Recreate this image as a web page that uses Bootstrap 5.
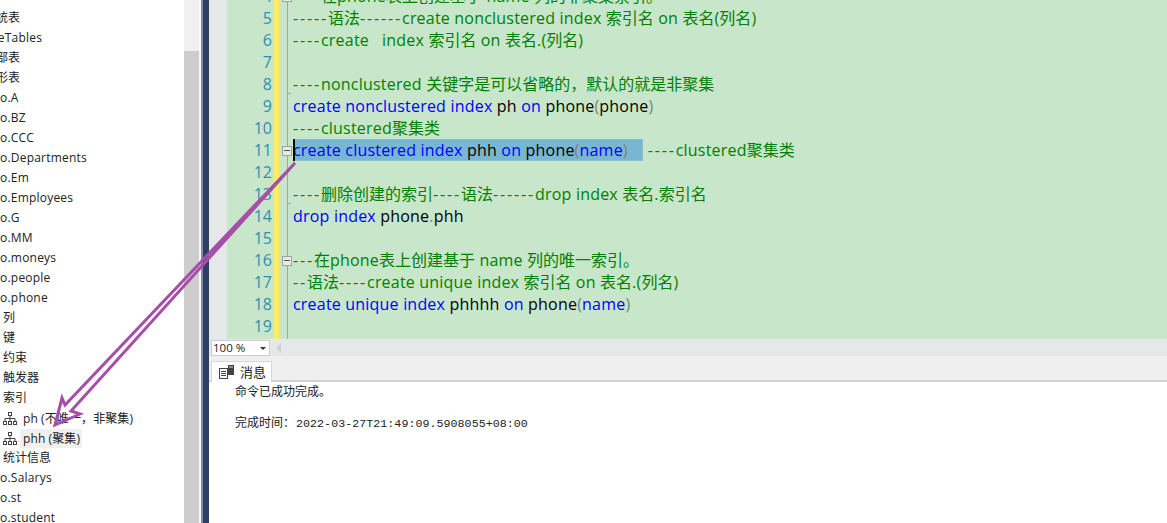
<!DOCTYPE html>
<html lang="zh">
<head>
<meta charset="utf-8">
<title>索引</title>
<link href="https://cdn.jsdelivr.net/npm/bootstrap@5.3.0/dist/css/bootstrap.min.css" rel="stylesheet">
<style>
html,body{height:523px;overflow:hidden;background:#fff}
.ui-font{font-family:"Open Sans","Noto Sans CJK SC",sans-serif}
.shell{height:523px;position:relative}
.tree-pane{width:184px;height:523px;overflow:hidden;padding-top:8px;font-size:12px;color:#222}
.tree-row{height:20px;line-height:20px;white-space:nowrap}
.in-1{padding-left:3px}
.cut-a{margin-left:-16px}
.cut-b{margin-left:-15px;letter-spacing:.2px}
.cut-c{margin-left:-15px;letter-spacing:.2px}
.tree-lbl{padding:0 2px 0 3px;height:19px;line-height:19px;margin-left:3px;letter-spacing:.1px}
.tree-sel{background:#f0f0f0}
.vscroll{width:15px;background:#f0f0f0;padding-top:51px}
.vthumb{height:100%;background:#cdcdcd}
.split-w{width:2px;background:#f8f8f8}
.split-l{width:2px;background:#7d8ca8}
.split-n{width:6px;background:#2d4063}
.main-col{width:958px;overflow:hidden}
.editor{height:339px;overflow:hidden;background:#c7e6ca;padding-top:0}
.code-wrap{margin-top:-15px}
.code-row{height:22px;line-height:22px;font-size:16px;white-space:pre;color:#008000;letter-spacing:.2px}
.cj{letter-spacing:0}
.gut{width:18px;background:#e6e7e8}
.num{width:45px;text-align:right;color:#2b91af;margin-right:2px;letter-spacing:0}
.yel{width:5px;background:#ffee62}
.fold{width:14px;position:relative}
.fold::before{content:"";position:absolute;left:8px;top:0;bottom:0;width:1px;background:#a5a5a5}
.fold-box{position:absolute;left:3px;top:7px;width:10px;height:10px;background:#e4ece4;border:1px solid #a0a0a0}
.fold-box::after{content:"";position:absolute;left:1px;right:1px;top:3px;height:1px;background:#555}
.fold-end::after{content:"";position:absolute;left:8px;bottom:1px;width:4px;height:1px;background:#a5a5a5}
.k{color:#00f}
.b{color:#000}
.g{color:#808080}
.ds{letter-spacing:1.85px}
.sel-run{background:#78b7d3;box-shadow:inset 0 0 0 1px #8dc0cc;padding-right:15px;margin-right:5px;display:inline-block;height:22px;position:relative}
.caret-bar{position:absolute;left:0;top:0;width:2px;height:22px;background:#000}
.zoom-bar{height:17px;background:#e6e7e8;padding-left:2px}
.zoom-box{width:59px;height:16px;background:#fff;border:1px solid #ccced4;font-size:11.5px;line-height:14px;padding-left:1px;color:#222;position:relative}
.zoom-drop{position:absolute;right:3px;top:6px;width:0;height:0;border-left:3px solid transparent;border-right:3px solid transparent;border-top:3px solid #333}
.zoom-left{width:0;height:0;margin-left:6px;border-top:5px solid transparent;border-bottom:5px solid transparent;border-right:5px solid #cfd1d6}
.tab-strip{height:26px;background:#efefef;border-bottom:2px solid #d2d2d2;padding:5px 0 0 2px}
.msg-tab{width:61px;height:21px;background:#fff;border:1px solid #d8d8d8;border-bottom:0;font-size:13px;line-height:20px;color:#222;gap:6px;padding-left:7px}
.results{font-size:12px;line-height:16px;color:#222;padding:2px 0 0 26px}
.results p{margin:0;height:31px}
.mono{font-family:"Liberation Mono",monospace;font-size:11.67px;margin-left:1px;letter-spacing:.03px}
.arrow-layer{position:absolute;left:0;top:0;pointer-events:none}
</style>
</head>
<body>
<div class="shell d-flex ui-font">
  <div class="tree-pane flex-shrink-0">
    <div class="tree-row"><span class="cut-a d-inline-block">系统表</span></div>
    <div class="tree-row"><span class="cut-c d-inline-block">FileTables</span></div>
    <div class="tree-row"><span class="cut-a d-inline-block">外部表</span></div>
    <div class="tree-row"><span class="cut-a d-inline-block">图形表</span></div>
    <div class="tree-row"><span class="cut-b d-inline-block">dbo.A</span></div>
    <div class="tree-row"><span class="cut-b d-inline-block">dbo.BZ</span></div>
    <div class="tree-row"><span class="cut-b d-inline-block">dbo.CCC</span></div>
    <div class="tree-row"><span class="cut-b d-inline-block">dbo.Departments</span></div>
    <div class="tree-row"><span class="cut-b d-inline-block">dbo.Em</span></div>
    <div class="tree-row"><span class="cut-b d-inline-block">dbo.Employees</span></div>
    <div class="tree-row"><span class="cut-b d-inline-block">dbo.G</span></div>
    <div class="tree-row"><span class="cut-b d-inline-block">dbo.MM</span></div>
    <div class="tree-row"><span class="cut-b d-inline-block">dbo.moneys</span></div>
    <div class="tree-row"><span class="cut-b d-inline-block">dbo.people</span></div>
    <div class="tree-row"><span class="cut-b d-inline-block">dbo.phone</span></div>
    <div class="tree-row in-1">列</div>
    <div class="tree-row in-1">键</div>
    <div class="tree-row in-1">约束</div>
    <div class="tree-row in-1">触发器</div>
    <div class="tree-row in-1">索引</div>
    <div class="tree-row in-1 d-flex align-items-center">
      <svg width="14" height="13" viewBox="0 0 14 13" fill="none" stroke="#444" stroke-width="1"><rect x="5.5" y="0.5" width="3" height="3"/><path d="M7 4v3M2 9V6.5h10V9M7 7v2"/><rect x="0.5" y="9.5" width="3" height="3"/><rect x="5.5" y="9.5" width="3" height="3"/><rect x="10.5" y="9.5" width="3" height="3"/></svg>
      <span class="tree-lbl">ph (不唯一，非聚集)</span>
    </div>
    <div class="tree-row in-1 d-flex align-items-center">
      <svg width="14" height="13" viewBox="0 0 14 13" fill="none" stroke="#444" stroke-width="1"><rect x="5.5" y="0.5" width="3" height="3"/><path d="M7 4v3M2 9V6.5h10V9M7 7v2"/><rect x="0.5" y="9.5" width="3" height="3"/><rect x="5.5" y="9.5" width="3" height="3"/><rect x="10.5" y="9.5" width="3" height="3"/></svg>
      <span class="tree-lbl tree-sel">phh (聚集)</span>
    </div>
    <div class="tree-row in-1">统计信息</div>
    <div class="tree-row"><span class="cut-b d-inline-block">dbo.Salarys</span></div>
    <div class="tree-row"><span class="cut-b d-inline-block">dbo.st</span></div>
    <div class="tree-row"><span class="cut-b d-inline-block">dbo.student</span></div>
  </div>
  <div class="vscroll flex-shrink-0"><div class="vthumb"></div></div>
  <div class="split-w flex-shrink-0"></div>
  <div class="split-l flex-shrink-0"></div>
  <div class="split-n flex-shrink-0"></div>
  <div class="main-col flex-grow-1 d-flex flex-column">
    <div class="editor">
      <div class="code-wrap">
        <div class="code-row d-flex"><div class="gut"></div><div class="num">4</div><div class="yel"></div><div class="fold"><div class="fold-box"></div></div><div><span class="ds">----</span><span class="cj">在</span>phone<span class="cj">表上创建基于</span> name <span class="cj">列的非聚集索引。</span></div></div>
        <div class="code-row d-flex"><div class="gut"></div><div class="num">5</div><div class="yel"></div><div class="fold"></div><div><span class="ds">-----</span><span class="cj">语法</span><span class="ds">------</span>create nonclustered index <span class="cj">索引名</span> on <span class="cj">表名</span>(<span class="cj">列名</span>)</div></div>
        <div class="code-row d-flex"><div class="gut"></div><div class="num">6</div><div class="yel"></div><div class="fold"></div><div><span class="ds">----</span>create   index <span class="cj">索引名</span> on <span class="cj">表名</span>.(<span class="cj">列名</span>)</div></div>
        <div class="code-row d-flex"><div class="gut"></div><div class="num">7</div><div class="yel"></div><div class="fold"></div><div></div></div>
        <div class="code-row d-flex"><div class="gut"></div><div class="num">8</div><div class="yel"></div><div class="fold fold-end"></div><div><span class="ds">----</span>nonclustered <span class="cj">关键字是可以省略的，默认的就是非聚集</span></div></div>
        <div class="code-row d-flex"><div class="gut"></div><div class="num">9</div><div class="yel"></div><div class="fold"></div><div><span class="k">create nonclustered index</span> <span class="b">ph</span> <span class="k">on</span> <span class="b">phone</span><span class="g">(</span><span class="b">phone</span><span class="g">)</span></div></div>
        <div class="code-row d-flex"><div class="gut"></div><div class="num">10</div><div class="yel"></div><div class="fold"></div><div><span class="ds">----</span>clustered<span class="cj">聚集类</span></div></div>
        <div class="code-row d-flex"><div class="gut"></div><div class="num">11</div><div class="yel"></div><div class="fold"><div class="fold-box"></div></div><div><span class="sel-run"><span class="caret-bar"></span><span class="k">create clustered index</span> <span class="b">phh</span> <span class="k">on</span> <span class="b">phone</span><span class="g">(</span><span class="k">name</span><span class="g">)</span></span><span class="ds">----</span>clustered<span class="cj">聚集类</span></div></div>
        <div class="code-row d-flex"><div class="gut"></div><div class="num">12</div><div class="yel"></div><div class="fold"></div><div></div></div>
        <div class="code-row d-flex"><div class="gut"></div><div class="num">13</div><div class="yel"></div><div class="fold fold-end"></div><div><span class="ds">----</span><span class="cj">删除创建的索引</span><span class="ds">----</span><span class="cj">语法</span><span class="ds">------</span>drop index <span class="cj">表名</span>.<span class="cj">索引名</span></div></div>
        <div class="code-row d-flex"><div class="gut"></div><div class="num">14</div><div class="yel"></div><div class="fold"></div><div><span class="k">drop index</span> <span class="b">phone</span><span class="g">.</span><span class="b">phh</span></div></div>
        <div class="code-row d-flex"><div class="gut"></div><div class="num">15</div><div class="yel"></div><div class="fold"></div><div></div></div>
        <div class="code-row d-flex"><div class="gut"></div><div class="num">16</div><div class="yel"></div><div class="fold"><div class="fold-box"></div></div><div><span class="ds">---</span><span class="cj">在</span>phone<span class="cj">表上创建基于</span> name <span class="cj">列的唯一索引。</span></div></div>
        <div class="code-row d-flex"><div class="gut"></div><div class="num">17</div><div class="yel"></div><div class="fold"></div><div><span class="ds">--</span><span class="cj">语法</span><span class="ds">----</span>create unique index <span class="cj">索引名</span> on <span class="cj">表名</span>.(<span class="cj">列名</span>)</div></div>
        <div class="code-row d-flex"><div class="gut"></div><div class="num">18</div><div class="yel"></div><div class="fold"></div><div><span class="k">create unique index</span> <span class="b">phhhh</span> <span class="k">on</span> <span class="b">phone</span><span class="g">(</span><span class="k">name</span><span class="g">)</span></div></div>
        <div class="code-row d-flex"><div class="gut"></div><div class="num">19</div><div class="yel"></div><div class="fold"></div><div></div></div>
        <div class="code-row d-flex"><div class="gut"></div><div class="num"></div><div class="yel"></div><div class="fold"></div><div></div></div>
      </div>
    </div>
    <div class="zoom-bar d-flex align-items-center">
      <div class="zoom-box">100 %<span class="zoom-drop"></span></div>
      <div class="zoom-left"></div>
    </div>
    <div class="tab-strip">
      <div class="msg-tab d-flex align-items-center">
        <svg width="15" height="14" viewBox="0 0 15 14" fill="none"><rect x="0.5" y="3.5" width="8" height="10" fill="#fff" stroke="#444"/><path d="M2 6.5h5M2 8.5h5M2 10.5h5" stroke="#444"/><rect x="9" y="0" width="6" height="10" fill="#444"/><path d="M10 2h4" stroke="#ddd"/></svg>
        <span>消息</span>
      </div>
    </div>
    <div class="results">
      <p>命令已成功完成。</p>
      <p>完成时间：<span class="mono">2022-03-27T21:49:09.5908055+08:00</span></p>
    </div>
  </div>
  <svg class="arrow-layer" width="1167" height="523" viewBox="0 0 1167 523" fill="none"><path d="M295 163L65 405L62 398L55 425L80 414L71 411L295 163Z" stroke="#a64fa8" stroke-width="3" stroke-linejoin="miter"/></svg>
</div>
<script src="https://cdn.jsdelivr.net/npm/bootstrap@5.3.0/dist/js/bootstrap.bundle.min.js"></script>
</body>
</html>
